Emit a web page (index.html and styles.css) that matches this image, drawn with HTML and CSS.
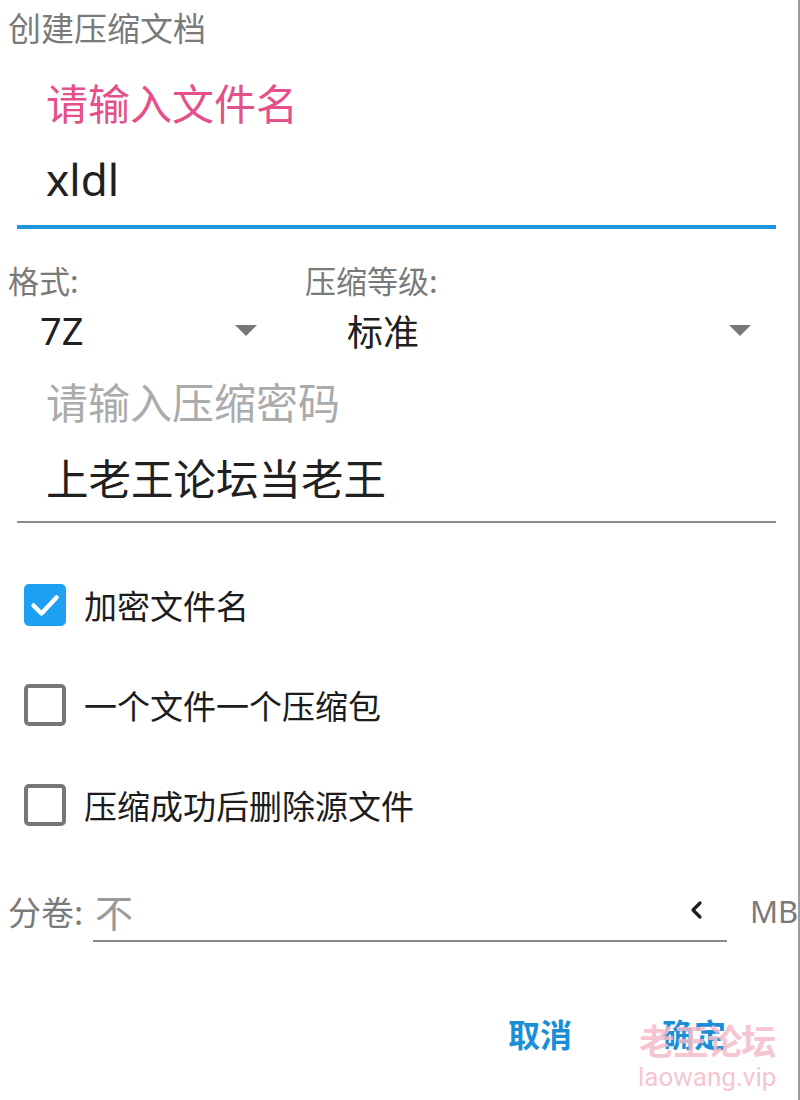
FILE: index.html
```html
<!DOCTYPE html>
<html lang="zh-CN">
<head>
<meta charset="utf-8">
<title>创建压缩文档</title>
<link rel="stylesheet" href="styles.css">
</head>
<body>
<div class="dialog">
  <div class="title">创建压缩文档</div>

  <div class="field name-field">
    <div class="float-label">请输入文件名</div>
    <div class="value latin">xldl</div>
  </div>

  <div class="options">
    <div class="opt">
      <div class="opt-label">格式:</div>
      <div class="select select-format">
        <span class="select-value latin">7Z</span>
        <span class="caret"></span>
      </div>
    </div>
    <div class="opt">
      <div class="opt-label">压缩等级:</div>
      <div class="select select-level">
        <span class="select-value cjk">标准</span>
        <span class="caret"></span>
      </div>
    </div>
  </div>

  <div class="field pwd-field">
    <div class="placeholder">请输入压缩密码</div>
    <div class="value pwd-value">上老王论坛当老王</div>
  </div>

  <div class="checks">
    <div class="check-row">
      <span class="box checked">
        <svg viewBox="0 0 42 42" width="42" height="42"><polyline points="9.5,21.5 17.5,29.5 32.5,13.5" fill="none" stroke="#ffffff" stroke-width="4.5" stroke-linecap="round" stroke-linejoin="round"/></svg>
      </span>
      <span class="check-text">加密文件名</span>
    </div>
    <div class="check-row">
      <span class="box"></span>
      <span class="check-text">一个文件一个压缩包</span>
    </div>
    <div class="check-row">
      <span class="box"></span>
      <span class="check-text">压缩成功后删除源文件</span>
    </div>
  </div>

  <div class="split">
    <span class="split-label">分卷:</span>
    <div class="split-input">
      <span class="split-hint">不</span>
      <svg class="chev" viewBox="0 0 14 20" width="14" height="20"><polyline points="11,3 4,10 11,17" fill="none" stroke="#1e1e1e" stroke-width="3.2" stroke-linecap="round" stroke-linejoin="round"/></svg>
    </div>
    <span class="unit latin">MB</span>
  </div>

  <div class="actions">
    <span class="btn">取消</span>
    <span class="btn">确定</span>
  </div>

  <div class="watermark">
    <div class="wm-cn">老王论坛</div>
    <div class="wm-en">laowang.vip</div>
  </div>
</div>
</body>
</html>
```

FILE: styles.css
```css
html, body {
  margin: 0;
  padding: 0;
  background: #ffffff;
}

body {
  font-family: "Noto Sans CJK SC", "Noto Sans", sans-serif;
}

.latin {
  font-family: "Noto Sans", "Noto Sans CJK SC", sans-serif;
}

.cjk {
  font-family: "Noto Sans CJK SC", sans-serif;
}

.dialog {
  position: relative;
  width: 800px;
  height: 1100px;
  box-sizing: border-box;
  border-right: 2px solid #9c9c9c;
  overflow: hidden;
}

.title {
  padding-left: 8px;
  height: 56px;
  font-size: 33px;
  line-height: 54px;
  color: #7a7a7a;
}

.field {
  margin: 0 22px 0 17px;
  padding-left: 29px;
}

.name-field {
  margin-top: 22px;
  padding-bottom: 18px;
  border-bottom: 4px solid #1e95df;
}

.float-label {
  font-size: 42px;
  line-height: 48px;
  color: #e4508a;
}

.value {
  color: #202020;
}

.name-field .value {
  margin-top: 25px;
  font-size: 44px;
  line-height: 56px;
}

.options {
  display: grid;
  grid-template-columns: 297px 1fr;
  padding-left: 8px;
  margin-right: 22px;
  margin-top: 31px;
}

.opt-label {
  font-size: 31px;
  line-height: 40px;
  color: #7a7a7a;
}

.select {
  display: flex;
  align-items: center;
  justify-content: space-between;
  height: 50px;
  margin-top: 5px;
  color: #202020;
}

.select-format {
  padding-left: 32px;
  padding-right: 48px;
}

.select-format .select-value {
  font-size: 38px;
}

.select-level {
  padding-left: 42px;
  padding-right: 25px;
}

.select-level .select-value {
  font-size: 36px;
}

.caret {
  width: 0;
  height: 0;
  border-left: 11px solid transparent;
  border-right: 11px solid transparent;
  border-top: 11px solid #777777;
}

.pwd-field {
  margin-top: 22px;
  padding-bottom: 16px;
  border-bottom: 2px solid #8a8a8a;
}

.placeholder {
  font-size: 42px;
  line-height: 48px;
  color: #ababab;
}

.pwd-value {
  margin-top: 24px;
  font-size: 42.5px;
  line-height: 56px;
}

.checks {
  margin-top: 32px;
  padding-left: 24px;
}

.check-row {
  display: flex;
  align-items: center;
  gap: 18px;
  height: 100px;
}

.box {
  width: 42px;
  height: 42px;
  box-sizing: border-box;
  border: 4px solid #777777;
  border-radius: 5px;
  display: block;
  flex-shrink: 0;
}

.box.checked {
  border: none;
  background: #1ea0f2;
}

.box svg {
  display: block;
}

.check-text {
  font-size: 33px;
  color: #1c1c1c;
}

.split {
  display: flex;
  align-items: center;
  margin-top: 25px;
  padding-left: 8px;
}

.split-label {
  flex-shrink: 0;
  width: 85px;
  font-size: 33px;
  color: #7a7a7a;
}

.split-input {
  flex-shrink: 0;
  display: flex;
  align-items: center;
  justify-content: space-between;
  width: 608px;
  height: 60px;
  border-bottom: 2px solid #8a8a8a;
  padding-left: 2px;
  padding-right: 24px;
  margin-right: 23px;
}

.split-hint {
  font-size: 38px;
  color: #9a9a9a;
}

.chev {
  display: block;
}

.unit {
  flex-shrink: 0;
  font-size: 31px;
  color: #7a7a7a;
}

.actions {
  display: flex;
  justify-content: flex-end;
  gap: 90px;
  padding-right: 72px;
  margin-top: 69px;
}

.btn {
  font-size: 32px;
  line-height: 44px;
  font-weight: 700;
  color: #1a8fd8;
}

.watermark {
  position: absolute;
  left: 638px;
  top: 1018px;
  text-align: center;
  color: #f5bccb;
  opacity: 0.85;
  pointer-events: none;
}

.wm-cn {
  font-size: 35px;
  line-height: 44px;
  font-weight: 700;
  letter-spacing: -1px;
}

.wm-en {
  font-family: "Roboto", "Noto Sans", sans-serif;
  font-size: 26px;
  line-height: 30px;
}
```
